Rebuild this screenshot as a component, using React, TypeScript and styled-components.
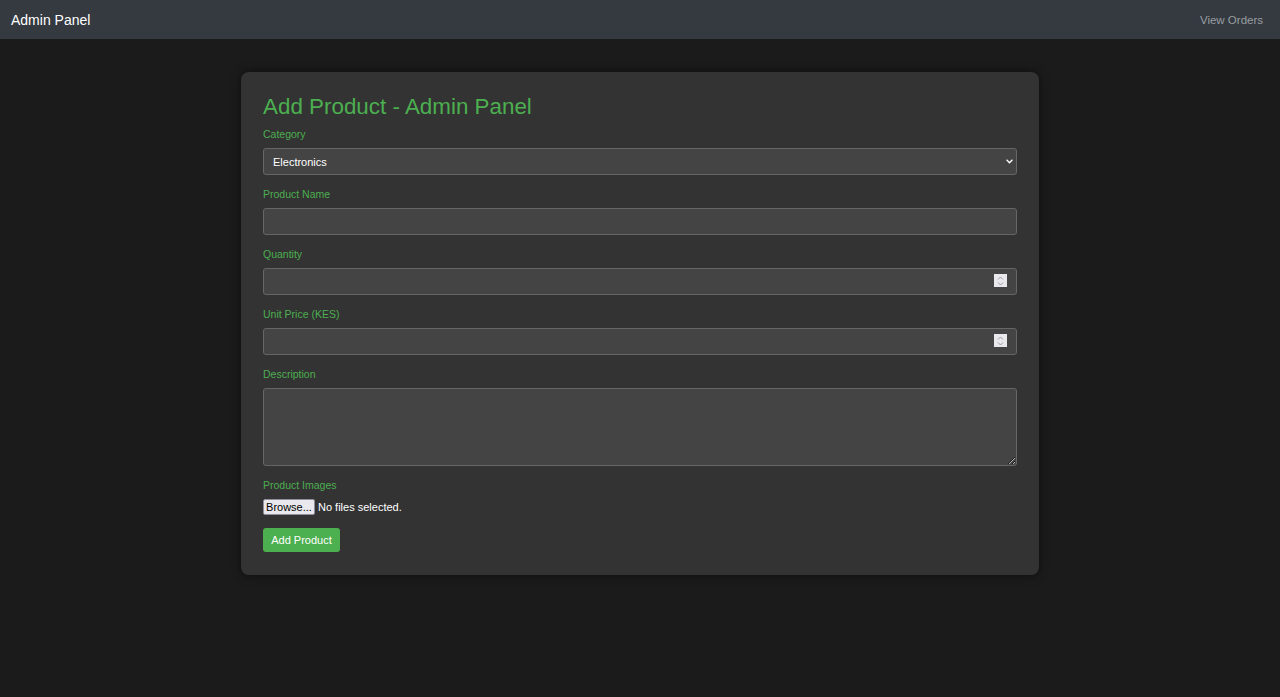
import React from "react";
import styled, { createGlobalStyle } from "styled-components";

const Global = createGlobalStyle`
  html, body { margin: 0; padding: 0; }
  body {
    background: #1b1b1b;
    font-family: "Liberation Sans", Arial, sans-serif;
    color: #fff;
    min-height: 697px;
  }
  * { box-sizing: border-box; }
`;

const NavBar = styled.nav`
  height: 39px;
  background: #343a40;
  display: flex;
  align-items: center;
  justify-content: space-between;
  padding: 0 17px 0 11px;
`;

const Brand = styled.span`
  font-size: 14px;
  color: #fff;
`;

const NavLink = styled.a`
  font-size: 11.5px;
  color: #9a9da1;
  text-decoration: none;
`;

const Card = styled.div`
  width: 798px;
  margin: 33px auto 0;
  background: #333333;
  border-radius: 8px;
  padding: 22px 22px 23px;
  box-shadow: 0 0 10px rgba(0, 0, 0, 0.5);
`;

const Title = styled.h2`
  margin: 1px 0 8px;
  font-size: 22.4px;
  line-height: 24px;
  font-weight: normal;
  color: #4caf50;
`;

const Field = styled.div`
  display: flex;
  flex-direction: column;
  margin-bottom: 12px;
  position: relative;
`;

const Label = styled.label`
  font-size: 10.5px;
  line-height: 14px;
  color: #4caf50;
  margin-bottom: 7px;
`;

const baseInput = `
  width: 100%;
  background: #444444;
  border: 1px solid #666666;
  border-radius: 3px;
  color: #fff;
  font-family: "Liberation Sans", Arial, sans-serif;
  font-size: 11px;
  padding: 0 9px;
  outline: none;
`;

const Input = styled.input`
  ${baseInput}
  height: 27px;
`;

const SelectWrap = styled.div`
  position: relative;
`;

const Select = styled.select`
  ${baseInput}
  height: 27px;
  appearance: none;
  -webkit-appearance: none;
`;

const Chevron = styled.svg`
  position: absolute;
  right: 4px;
  top: 11px;
  pointer-events: none;
`;

const InputWrap = styled.div`
  position: relative;
`;

const Spinner = styled.div`
  position: absolute;
  right: 10px;
  top: 6px;
  width: 13px;
  height: 13px;
  background: #e9e9ed;
  display: flex;
  align-items: center;
  justify-content: center;
  pointer-events: none;
`;

const TextArea = styled.textarea`
  ${baseInput}
  height: 78px;
  padding: 6px 9px;
  resize: vertical;
  display: block;
`;

const FileRow = styled.div`
  display: flex;
  align-items: center;
  gap: 3px;
  height: 16px;
`;

const BrowseButton = styled.span`
  display: inline-flex;
  align-items: center;
  justify-content: center;
  width: 52px;
  height: 16px;
  background: #e9e9ed;
  border: 1px solid #8f8f9d;
  border-radius: 2px;
  color: #000;
  font-size: 11px;
`;

const FileText = styled.span`
  font-size: 11px;
  color: #fff;
`;

const SubmitButton = styled.button`
  margin-top: 13px;
  height: 24px;
  width: 77px;
  background: #4caf50;
  color: #fff;
  border: none;
  border-radius: 3px;
  font-family: "Liberation Sans", Arial, sans-serif;
  font-size: 11px;
  padding: 0;
  cursor: pointer;
  display: block;
`;

const SpinIcon = () => (
  <svg width="7" height="10" viewBox="0 0 7 10">
    <path d="M1 3.5 L3.5 1 L6 3.5" fill="none" stroke="#9a9aa2" strokeWidth="1" />
    <path d="M1 6.5 L3.5 9 L6 6.5" fill="none" stroke="#9a9aa2" strokeWidth="1" />
  </svg>
);

export default function App() {
  return (
    <>
      <Global />
      <NavBar>
        <Brand>Admin Panel</Brand>
        <NavLink href="#">View Orders</NavLink>
      </NavBar>
      <Card>
        <Title>Add Product - Admin Panel</Title>
        <Field>
          <Label>Category</Label>
          <SelectWrap>
            <Select defaultValue="Electronics">
              <option>Electronics</option>
              <option>Clothing</option>
            </Select>
            <Chevron width="7" height="5" viewBox="0 0 7 5">
              <path d="M0.6 0.8 L3.5 3.8 L6.4 0.8" fill="none" stroke="#fff" strokeWidth="1.3" />
            </Chevron>
          </SelectWrap>
        </Field>
        <Field>
          <Label>Product Name</Label>
          <Input type="text" />
        </Field>
        <Field>
          <Label>Quantity</Label>
          <InputWrap>
            <Input type="text" />
            <Spinner><SpinIcon /></Spinner>
          </InputWrap>
        </Field>
        <Field>
          <Label>Unit Price (KES)</Label>
          <InputWrap>
            <Input type="text" />
            <Spinner><SpinIcon /></Spinner>
          </InputWrap>
        </Field>
        <Field>
          <Label>Description</Label>
          <TextArea />
        </Field>
        <Field>
          <Label>Product Images</Label>
          <FileRow>
            <BrowseButton>Browse...</BrowseButton>
            <FileText>No files selected.</FileText>
          </FileRow>
        </Field>
        <SubmitButton>Add Product</SubmitButton>
      </Card>
    </>
  );
}
